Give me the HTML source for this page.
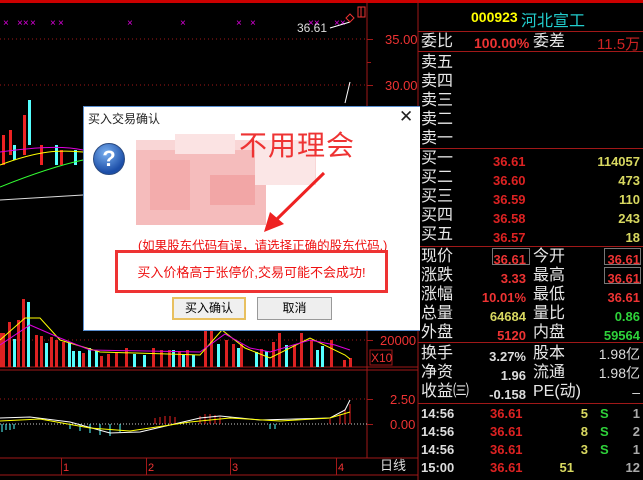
<!DOCTYPE html>
<html><head><meta charset="utf-8"><style>
*{margin:0;padding:0;box-sizing:border-box}
body{width:643px;height:480px;background:#000;position:relative;overflow:hidden;font-family:"Liberation Sans","Noto Sans CJK SC",sans-serif}
.a{position:absolute;white-space:nowrap}
.r{color:#e8e8e8;font-size:16px;line-height:19px}
.v{font-family:"Liberation Sans",sans-serif;font-weight:bold;font-size:13px}
.red{color:#e33}.yel{color:#d8d860}.grn{color:#2ed23a}.wht{color:#ddd}
.hl{position:absolute;height:1px;background:#a01818;left:418px;width:225px}
</style></head><body>
<svg class="a" style="left:0;top:0" width="643" height="480">
<rect x="0" y="0" width="643" height="3" fill="#c00"/>
<line x1="418" y1="0" x2="418" y2="480" stroke="#a01818"/>
<line x1="367" y1="0" x2="367" y2="458" stroke="#a01818"/>
<g stroke="#a01818" stroke-dasharray="1,3"><line x1="0" y1="39" x2="367" y2="39"/><line x1="0" y1="85" x2="367" y2="85"/><line x1="0" y1="340" x2="367" y2="340"/><line x1="0" y1="399" x2="367" y2="399"/></g>
<line x1="0" y1="424" x2="367" y2="424" stroke="#ccc" stroke-dasharray="1,2"/>
<line x1="0" y1="367" x2="418" y2="367" stroke="#a01818"/>
<line x1="0" y1="370" x2="418" y2="370" stroke="#a01818"/>
<line x1="0" y1="458" x2="418" y2="458" stroke="#a01818"/>
<line x1="0" y1="475" x2="418" y2="475" stroke="#a01818"/>
<g fill="#a01818"><rect x="367" y="39" width="6" height="1"/><rect x="367" y="62" width="4" height="1"/><rect x="367" y="85" width="6" height="1"/><rect x="367" y="340" width="6" height="1"/><rect x="367" y="399" width="6" height="1"/><rect x="367" y="424" width="6" height="1"/><rect x="61" y="458" width="1" height="17"/><rect x="146" y="458" width="1" height="17"/><rect x="230" y="458" width="1" height="17"/><rect x="336" y="458" width="1" height="17"/></g>
<g fill="#d0d" font-size="10" font-family="Liberation Sans">
<text x="3" y="26">×</text><text x="17" y="26">××</text><text x="30" y="26">×</text><text x="50" y="26">×</text><text x="58" y="26">×</text><text x="127" y="26">×</text><text x="180" y="26">×</text><text x="236" y="26">×</text><text x="250" y="26">×</text><text x="308" y="26">××</text><text x="334" y="26">××</text></g>
<text x="297" y="32" fill="#ddd" font-size="12">36.61</text>
<path d="M330 28 L350 22" stroke="#fff"/>
<path d="M346 18 l4 -4 4 4 -4 4z M358 7h7v10h-7z M361 7v10" stroke="#e33" fill="none"/>
<path d="M345 103 L350 82" stroke="#fff"/>
<g fill="#e33" font-size="13" font-family="Liberation Sans"><text x="385" y="44">35.00</text><text x="385" y="90">30.00</text><text x="380" y="345">20000</text><text x="390" y="429">0.00</text><text x="390" y="404">2.50</text><text x="63" y="471" font-size="11">1</text><text x="148" y="471" font-size="11">2</text><text x="232" y="471" font-size="11">3</text><text x="338" y="471" font-size="11">4</text></g>
<rect x="370" y="350" width="22" height="15" fill="none" stroke="#a01818"/><text x="371" y="362" fill="#e33" font-size="12">X10</text>
<text x="380" y="470" fill="#ddd" font-size="13" font-family="Noto Sans CJK SC">日线</text>
<g fill="#e22"><rect x="2" y="135" width="3" height="30"/><rect x="9" y="130" width="3" height="25"/><rect x="23" y="115" width="3" height="40"/><rect x="40" y="145" width="3" height="20"/><rect x="60" y="150" width="3" height="15"/></g>
<g fill="#5ff"><rect x="28" y="100" width="3" height="45"/><rect x="13" y="145" width="3" height="15"/><rect x="55" y="145" width="3" height="20"/><rect x="74" y="150" width="3" height="15"/></g>
<path d="M0 165 C40 150 60 150 83 152" stroke="#ff0" fill="none"/>
<path d="M0 152 C30 148 60 145 83 150" stroke="#d0d" fill="none"/>
<path d="M0 187 C30 175 60 165 83 160" stroke="#3f3" fill="none"/>
<path d="M0 200 L83 195" stroke="#ddd" fill="none"/>
<g fill="#d22">
<rect x="0" y="333" width="5" height="34"/><rect x="8" y="322" width="3" height="45"/><rect x="17" y="320" width="3" height="47"/><rect x="22" y="299" width="3" height="68"/><rect x="35" y="335" width="3" height="32"/><rect x="40" y="336" width="3" height="31"/><rect x="50" y="337" width="3" height="30"/><rect x="55" y="340" width="3" height="27"/><rect x="62" y="342" width="3" height="25"/><rect x="82" y="353" width="3" height="14"/><rect x="100" y="356" width="3" height="11"/><rect x="107" y="354" width="3" height="13"/><rect x="115" y="352" width="3" height="15"/><rect x="125" y="348" width="3" height="19"/><rect x="152" y="348" width="3" height="19"/><rect x="160" y="350" width="3" height="17"/><rect x="168" y="350" width="3" height="17"/><rect x="178" y="351" width="3" height="16"/><rect x="186" y="350" width="3" height="17"/><rect x="204" y="330" width="3" height="37"/><rect x="210" y="322" width="3" height="45"/><rect x="225" y="340" width="3" height="27"/><rect x="232" y="344" width="3" height="23"/><rect x="240" y="344" width="3" height="23"/><rect x="260" y="349" width="3" height="18"/><rect x="272" y="342" width="3" height="25"/><rect x="278" y="333" width="3" height="34"/><rect x="293" y="345" width="3" height="22"/><rect x="300" y="333" width="3" height="34"/><rect x="310" y="340" width="3" height="27"/><rect x="330" y="340" width="3" height="27"/><rect x="343" y="360" width="3" height="7"/><rect x="349" y="358" width="3" height="9"/></g>
<g fill="#5ff"><rect x="13" y="339" width="3" height="28"/><rect x="27" y="302" width="3" height="65"/><rect x="45" y="343" width="3" height="24"/><rect x="68" y="343" width="3" height="24"/><rect x="72" y="351" width="3" height="16"/><rect x="78" y="351" width="3" height="16"/><rect x="88" y="348" width="3" height="19"/><rect x="95" y="351" width="3" height="16"/><rect x="133" y="354" width="3" height="13"/><rect x="143" y="355" width="3" height="12"/><rect x="172" y="350" width="3" height="17"/><rect x="182" y="355" width="3" height="12"/><rect x="192" y="355" width="3" height="12"/><rect x="217" y="344" width="3" height="23"/><rect x="237" y="348" width="3" height="19"/><rect x="255" y="352" width="3" height="15"/><rect x="265" y="351" width="3" height="16"/><rect x="285" y="345" width="3" height="22"/><rect x="316" y="350" width="3" height="17"/><rect x="321" y="346" width="3" height="21"/></g>
<path d="M0 340 L25 318 L40 318 L60 340 L100 352 L200 355 L222 330 L245 348 L270 358 L310 338 L345 355 L350 359" stroke="#ff0" fill="none"/>
<path d="M0 345 L30 325 L60 338 L90 350 L200 352 L225 334 L250 348 L270 352 L310 340 L335 345 L350 350" stroke="#d0d" fill="none"/>
<g stroke="#5ff"><path d="M2 424v8M6 424v6M10 424v6M14 424v5M70 424v5M80 424v7M90 424v9M100 424v11M110 424v12M120 424v8M270 424v5M275 424v5"/></g>
<g stroke="#e22"><path d="M155 424v-6M160 424v-7M165 424v-8M170 424v-8M175 424v-7M200 424v-8M205 424v-10M210 424v-10M215 424v-9M220 424v-7M330 424v-5M340 424v-10M345 424v-15M350 424v-20"/></g>
<path d="M0 418 L30 417 L70 422 L110 433 L140 432 L200 418 L220 416 L260 420 L330 418 L345 410 L350 400" stroke="#fff" fill="none"/>
<path d="M0 421 L40 419 L90 428 L130 431 L190 422 L230 418 L280 421 L330 418 L350 412" stroke="#ff0" fill="none"/>
</svg>

<div class="hl" style="top:31px"></div><div class="hl" style="top:51px"></div><div class="hl" style="top:148px"></div><div class="hl" style="top:246px"></div><div class="hl" style="top:342px"></div><div class="hl" style="top:403px"></div>
<div class="a v" style="left:471px;top:9px;color:#ff0;font-size:14px">000923</div>
<div class="a" style="left:521px;top:7px;color:#2cc;font-size:16px">河北宣工</div>
<div class="a r" style="left:421px;top:32px">委比</div><div class="a v red" style="left:474px;top:35px;font-size:14px">100.00%</div><div class="a r" style="left:533px;top:32px">委差</div><div class="a red" style="left:597px;top:33px;font-size:15px;color:#c22">11.5万</div>
<div class="a r" style="left:421px;top:53px;line-height:19px">卖五<br>卖四<br>卖三<br>卖二<br>卖一</div>
<div class="a r" style="left:421px;top:149px">买一<br>买二<br>买三<br>买四<br>买五</div>
<div class="a v red" style="left:493px;top:152px;line-height:19px;color:#d22">36.61<br>36.60<br>36.59<br>36.58<br>36.57</div>
<div class="a v yel" style="right:3px;top:152px;line-height:19px;text-align:right">114057<br>473<br>110<br>243<br>18</div>
<div class="a r" style="left:421px;top:247px">现价<br>涨跌<br>涨幅<br>总量<br>外盘</div>
<div class="a r" style="left:533px;top:247px">今开<br>最高<br>最低<br>量比<br>内盘</div>
<div class="a v" style="right:117px;top:250px;line-height:19px;text-align:right"><span class="red">36.61</span><br><span class="red">3.33</span><br><span class="red">10.01%</span><br><span class="yel">64684</span><br><span class="red">5120</span></div>
<div class="a v" style="right:3px;top:250px;line-height:19px;text-align:right"><span class="red">36.61</span><br><span class="red">36.61</span><br><span class="red">36.61</span><br><span class="grn">0.86</span><br><span class="grn">59564</span></div>
<div style="position:absolute;left:492px;top:248px;width:38px;height:17px;border:1px solid #777"></div>
<div style="position:absolute;left:604px;top:248px;width:37px;height:17px;border:1px solid #777"></div>
<div style="position:absolute;left:604px;top:267px;width:37px;height:17px;border:1px solid #777"></div>
<div class="a r" style="left:421px;top:344px">换手<br>净资<br>收益㈢</div>
<div class="a r" style="left:533px;top:344px">股本<br>流通<br>PE(动)</div>
<div class="a v wht" style="right:117px;top:347px;line-height:19px;text-align:right">3.27%<br>1.96<br>-0.158</div>
<div class="a wht" style="right:3px;top:345px;line-height:19px;text-align:right;font-size:14px">1.98亿<br>1.98亿<br>–</div>
<div class="a v wht" style="left:421px;top:405px;line-height:18px">14:56<br>14:56<br>14:56<br>15:00</div>
<div class="a v red" style="left:490px;top:405px;line-height:18px;color:#d22">36.61<br>36.61<br>36.61<br>36.61</div>
<div class="a v yel" style="right:55px;top:405px;line-height:18px;text-align:right">5<br>8<br>3<br><span style="margin-right:14px">51</span></div>
<div class="a v grn" style="left:600px;top:405px;line-height:18px">S<br>S<br>S</div>
<div class="a v" style="right:3px;top:405px;line-height:18px;text-align:right;color:#aaa">1<br>2<br>1<br>12</div>

<div style="position:absolute;left:83px;top:106px;width:337px;height:225px;background:#fff;border:1px solid #5a8fd0;border-right:none"></div>
<div class="a" style="left:88px;top:110px;font-size:12px;color:#222">买入交易确认</div>
<div class="a" style="left:399px;top:107px;font-size:17px;color:#222">✕</div>
<div style="position:absolute;left:93px;top:143px;width:32px;height:32px;border-radius:50%;background:radial-gradient(circle at 40% 30%,#7ab0f0,#1c4ea8 70%);border:1px solid #2a4a80;color:#fff;font:bold 22px 'Liberation Sans';text-align:center;line-height:30px">?</div>
<div style="position:absolute;left:136px;top:140px;width:180px;height:45px;background:#f9d6d6"></div>
<div style="position:absolute;left:136px;top:150px;width:130px;height:75px;background:#f5bcbc"></div>
<div style="position:absolute;left:175px;top:134px;width:60px;height:20px;background:#fbe3e3"></div>
<div style="position:absolute;left:150px;top:160px;width:40px;height:50px;background:#f3acac"></div>
<div style="position:absolute;left:210px;top:175px;width:45px;height:30px;background:#f2a6a6"></div>
<div style="position:absolute;left:255px;top:140px;width:60px;height:45px;background:#fbe6e6"></div>
<div class="a" style="left:239px;top:124px;font-size:28px;color:#e33;font-family:'Noto Sans CJK SC',sans-serif;letter-spacing:1px">不用理会</div>
<svg class="a" style="left:0;top:0" width="420" height="330"><path d="M324 173 L276 220" stroke="#e22" stroke-width="3"/><path d="M264 232 L270 212 L284 224z" fill="#e22"/></svg>
<div class="a" style="left:138px;top:235px;font-size:12.5px;color:#e11">(如果股东代码有误，请选择正确的股东代码.)</div>
<div style="position:absolute;left:115px;top:250px;width:273px;height:43px;border:3px solid #e33"></div>
<div class="a" style="left:115px;top:262px;width:273px;text-align:center;font-size:13px;color:#e11">买入价格高于张停价,交易可能不会成功!</div>
<div class="a" style="left:172px;top:297px;width:74px;height:23px;border:2px solid #e8c060;background:#f0f0f0;font-size:12px;text-align:center;line-height:19px;color:#000">买入确认</div>
<div class="a" style="left:257px;top:297px;width:75px;height:23px;border:1px solid #999;background:#eee;font-size:12px;text-align:center;line-height:21px;color:#000">取消</div>
</body></html>
